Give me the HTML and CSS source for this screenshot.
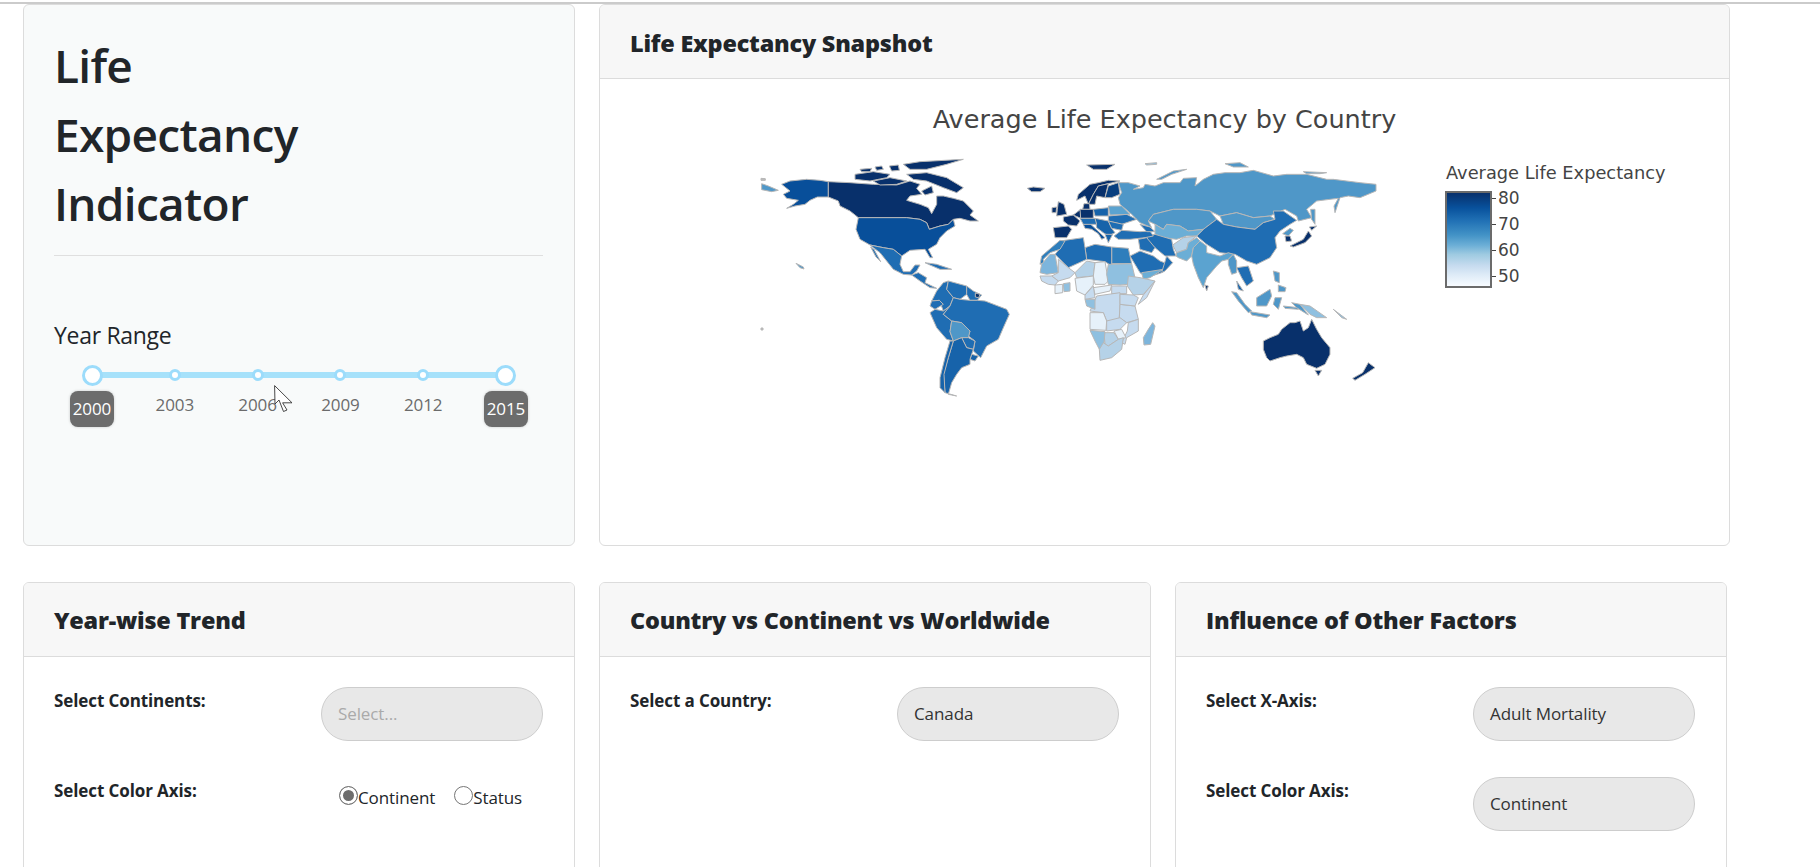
FILE: index.html
```html
<!DOCTYPE html>
<html lang="en">
<head>
<meta charset="utf-8">
<title>Life Expectancy Indicator</title>
<link rel="stylesheet" href="styles.css">
</head>
<body>
<div class="topline"></div>
<main class="page">
  <section class="row row-top">
    <aside class="card side">
      <h1 class="title">Life<br>Expectancy<br>Indicator</h1>
      <hr class="rule">
      <h4 class="range-label">Year Range</h4>
      <div class="slider">
        <div class="stop"><span class="dot-wrap"><i class="handle"></i></span><span class="tip">2000</span></div>
        <div class="stop"><span class="dot-wrap"><i class="dot"></i></span><span class="mark">2003</span></div>
        <div class="stop"><span class="dot-wrap"><i class="dot"></i></span><span class="mark">2006</span></div>
        <div class="stop"><span class="dot-wrap"><i class="dot"></i></span><span class="mark">2009</span></div>
        <div class="stop"><span class="dot-wrap"><i class="dot"></i></span><span class="mark">2012</span></div>
        <div class="stop"><span class="dot-wrap"><i class="handle"></i></span><span class="tip">2015</span></div>
      </div>
    </aside>
    <article class="card wide">
      <header class="card-head head-top">Life Expectancy Snapshot</header>
      <div class="plot">
        <div class="plot-title">Average Life Expectancy by Country</div>
        <div class="plot-main">
          <svg class="map" viewBox="0 0 1920 810" aria-label="World choropleth map">
            <g>
              <!-- Americas -->
              <polygon class="s3" points="65,128 85,135 115,148 95,152 65,146"/>
              <polygon class="n" points="63,112 76,113 76,118 63,118"/>
              <polygon class="s1" points="265,122 265,168 232,168 210,178 195,190 165,195 140,202 160,190 175,178 140,172 130,160 150,150 125,130 150,120 200,115 240,118"/>
              <polygon class="s0" points="265,122 330,125 400,130 470,132 510,120 540,130 530,142 545,160 510,165 500,178 540,190 565,200 575,218 590,190 590,165 610,165 640,172 670,180 700,210 690,222 715,240 690,240 660,232 640,235 625,250 600,255 568,265 560,245 540,235 500,230 355,230 330,210 300,195 295,180 265,168"/>
              <polygon class="s0" points="490,70 540,62 670,55 620,70 560,85 510,85"/>
              <polygon class="s0" points="345,100 400,92 450,100 440,110 390,120 345,115"/>
              <polygon class="s0" points="400,120 450,110 500,120 470,130 420,132"/>
              <polygon class="s0" points="500,100 560,95 620,110 670,140 650,155 610,140 560,120 520,115"/>
              <polygon class="s0" points="360,85 395,82 390,92 365,92"/>
              <polygon class="s0" points="405,78 425,75 430,85 410,88"/>
              <polygon class="s0" points="448,75 475,72 478,88 455,90"/>
              <polygon class="s0" points="545,150 575,135 580,155 555,162"/>
              <polygon class="s1" points="355,230 500,230 540,235 560,245 568,265 600,255 625,250 640,235 645,255 620,270 600,290 590,310 565,325 578,350 570,350 555,325 510,328 485,345 460,325 430,320 390,312 360,295 348,265"/>
              <polygon class="s2" points="390,312 430,320 460,325 485,345 480,370 490,392 510,392 525,372 540,372 530,390 515,402 490,400 460,385 440,360 420,335 400,320"/>
              <polygon class="s2" points="392,318 402,325 422,362 408,348"/>
              <polygon class="s2" points="515,402 535,395 560,410 555,425 590,442 570,440 540,420"/>
              <polygon class="s2" points="555,365 590,370 635,385 600,385 570,372"/>
              <polygon class="s3" points="168,367 190,378 192,384 180,380"/>
              <polygon class="s2" points="610,425 625,420 620,445 640,470 630,495 610,510 598,478 575,480 590,450"/>
              <polygon class="s2" points="625,420 680,435 680,460 660,475 640,470 620,445"/>
              <polygon class="s2" points="680,435 700,450 725,462 712,478 690,478 680,460"/>
              <polygon class="s0" points="706,456 720,460 716,470 706,468"/>
              <polygon class="s2" points="575,480 598,478 610,490 585,505 570,495"/>
              <polygon class="s2" points="585,505 610,510 630,495 610,520 635,540 630,572 640,600 620,595 590,560 570,515"/>
              <polygon class="s2" points="640,470 660,475 690,478 712,478 735,480 800,505 808,520 790,560 775,595 740,615 722,650 700,630 705,600 685,585 690,570 665,545 635,540 610,520 630,495"/>
              <polygon class="s3" points="635,540 665,545 690,570 685,590 665,590 640,600 630,572"/>
              <polygon class="s2" points="665,590 685,590 705,600 700,625 680,620"/>
              <polygon class="s1b" points="695,640 715,645 705,660 690,655"/>
              <polygon class="s1b" points="640,600 665,590 680,620 700,625 690,655 690,670 665,680 650,700 635,725 625,760 650,765 615,755 610,700 625,650"/>
              <polygon class="s1b" points="630,600 640,600 625,650 612,700 615,755 600,740 600,710 615,650"/>
              <polygon class="n" points="63,561 69,561 69,567 63,567"/>
              <polygon class="s0" points="862,142 880,138 915,142 900,152 875,152"/>
            </g>
            <g class="east">
              <!-- Eurasia -->
              <polygon class="s3" points="235,125 265,125 300,135 280,145 310,140 315,130 345,135 370,125 420,125 430,112 470,110 465,135 490,115 520,100 555,95 600,95 640,88 665,95 700,105 740,100 800,100 860,115 880,115 960,125 1008,130 1008,150 960,170 925,165 900,170 885,215 882,195 895,172 870,175 830,180 800,205 815,230 775,240 770,225 735,205 690,225 640,230 590,215 540,225 510,210 470,205 400,205 340,220 325,240 335,260 300,245 275,220 240,190 235,170 245,155"/>
              <polygon class="s3" points="555,68 600,65 625,78 580,78"/>
              <polygon class="s3" points="350,115 400,90 440,85 395,100 365,115"/>
              <polygon class="s3" points="790,92 860,95 840,98 800,98"/>
              <polygon class="s3" points="812,205 825,205 825,250 815,235"/>
              <polygon class="s5" points="315,68 350,65 350,70 320,72"/>
              <polygon class="s0" points="140,72 225,70 200,85 160,85"/>
              <polygon class="s3" points="340,220 400,205 470,205 510,210 530,235 490,265 445,270 420,255 380,250 370,265 345,250 325,240"/>
              <polygon class="s3" points="540,225 590,215 640,230 690,225 705,235 670,245 645,265 590,258 550,250"/>
              <polygon class="s2" points="530,235 550,250 590,258 645,265 670,245 705,235 700,210 730,210 770,238 750,250 720,270 705,290 710,320 690,350 650,370 620,360 585,340 540,335 500,310 470,285 490,265"/>
              <polygon class="s3" points="728,278 750,262 760,268 745,285"/>
              <polygon class="s0" points="735,285 750,285 755,300 738,302"/>
              <polygon class="s0" points="750,315 790,295 805,270 815,285 795,305 760,318"/>
              <polygon class="s0" points="808,258 830,255 815,268"/>
              <polygon class="s4" points="345,250 370,265 380,250 420,255 445,270 490,265 470,285 440,285 410,295 370,290 345,280"/>
              <polygon class="s2" points="320,285 345,280 395,295 400,325 408,345 375,345 345,320 325,305"/>
              <polygon class="s6" points="398,312 430,290 470,285 445,305 440,325 410,335"/>
              <polygon class="s4" points="408,345 410,335 440,325 445,305 470,290 480,300 460,320 455,345 440,360 415,350"/>
              <polygon class="s3b" points="455,345 460,320 480,300 500,315 500,335 540,345 565,335 580,340 565,355 545,360 530,375 500,410 490,440 475,410 460,370"/>
              <polygon class="s0" points="495,432 505,435 500,450"/>
              <polygon class="s3" points="565,355 580,340 590,360 590,395 575,400 565,370"/>
              <polygon class="s2" points="590,380 625,375 640,420 620,435 605,410"/>
              <polygon class="s1b" points="590,420 610,450 595,445"/>
              <polygon class="s3" points="575,452 590,455 615,490 635,510 625,515 595,480"/>
              <polygon class="s3" points="630,512 690,522 680,530 635,522"/>
              <polygon class="s3" points="650,470 690,445 695,465 680,495 650,495"/>
              <polygon class="s3" points="705,470 725,470 715,505 700,490"/>
              <polygon class="s3" points="700,390 718,395 718,425 705,420"/>
              <polygon class="s3" points="715,432 738,440 735,452 715,452"/>
              <polygon class="s3" points="730,495 775,500 775,505 735,502"/>
              <polygon class="s3" points="755,485 780,490 805,522 770,500"/>
              <polygon class="s5" points="780,490 810,495 860,530 830,530 810,520"/>
              <polygon class="s5" points="880,505 920,535 905,530"/>
              <polygon class="s0" points="670,600 690,590 715,580 725,565 750,545 765,545 780,540 790,570 805,560 815,535 830,565 845,590 870,620 870,640 855,670 830,682 800,670 790,650 770,640 740,645 720,650 690,660 680,650 670,625"/>
              <polygon class="s0" points="825,688 845,688 835,705"/>
              <polygon class="s0" points="985,665 1005,680 975,700 945,718 938,712 968,695"/>
              <!-- Middle East -->
              <polygon class="s2" points="222,285 245,268 300,272 330,270 340,285 315,290 270,295 235,295"/>
              <polygon class="s2" points="300,250 330,258 345,272 320,272"/>
              <polygon class="s2" points="295,295 320,290 345,320 335,335 300,325"/>
              <polygon class="s2" points="270,345 300,330 340,345 360,360 385,370 365,395 320,410 300,395"/>
              <polygon class="s4" points="305,395 370,385 330,410 310,415"/>
              <polygon class="s2" points="380,345 398,365 375,390 365,395"/>
              <!-- Africa -->
              <polygon class="s2b" points="215,318 265,322 275,368 215,368"/>
              <polygon class="s2" points="135,320 165,310 215,318 215,375 195,362 140,355"/>
              <polygon class="s2" points="60,300 130,290 135,320 140,355 85,380 45,340 60,322"/>
              <polygon class="s2b" points="40,315 60,298 75,300 60,325 30,335 10,355 12,365 0,370 5,345"/>
              <polygon class="s4b" points="5,370 30,340 45,340 55,395 20,400 0,395"/>
              <polygon class="s7" points="55,355 85,380 105,395 90,410 55,420 35,405 55,395"/>
              <polygon class="s6" points="105,395 140,360 165,365 160,405 110,410"/>
              <polygon class="s8" points="165,365 195,362 205,420 195,430 165,430 160,405"/>
              <polygon class="s5" points="205,370 275,368 285,410 262,430 240,432 205,430 200,400"/>
              <polygon class="s6" points="265,405 300,410 345,420 310,460 280,462 262,435"/>
              <polygon class="s7" points="345,420 320,470 295,490 310,462"/>
              <polygon class="s7" points="215,435 260,435 260,458 215,458"/>
              <polygon class="s8" points="160,440 215,432 210,450 165,460"/>
              <polygon class="s7" points="0,405 35,405 55,420 45,432 25,430 5,420"/>
              <polygon class="s8" points="45,432 68,430 68,455 45,458"/>
              <polygon class="s5" points="70,428 90,425 90,450 72,452"/>
              <polygon class="s8" points="105,412 160,405 160,432 135,462 110,450"/>
              <polygon class="s7" points="135,462 160,435 165,470 135,475"/>
              <polygon class="s7" points="170,465 240,455 240,490 238,530 232,540 200,540 190,515 150,510"/>
              <polygon class="s5" points="135,475 165,475 165,505 140,495"/>
              <polygon class="s8" points="150,515 190,515 200,540 198,568 150,565"/>
              <polygon class="s7" points="240,490 285,495 295,535 260,545 238,530"/>
              <polygon class="s7" points="240,460 280,462 295,470 285,495 240,490"/>
              <polygon class="s7" points="200,540 240,530 260,545 240,565 200,570"/>
              <polygon class="s7" points="265,545 295,535 295,570 260,590 255,610 245,605 262,570"/>
              <polygon class="s8" points="222,570 245,565 258,590 235,595"/>
              <polygon class="s6" points="192,575 222,575 235,595 205,615 195,610"/>
              <polygon class="s5" points="150,568 195,572 190,625 178,625 165,600"/>
              <polygon class="s6" points="190,605 205,615 235,595 250,590 245,625 215,650 180,658 178,625"/>
              <polygon class="s4b" points="338,545 345,555 332,610 312,612 310,590 325,565"/>
              <!-- Europe -->
              <polygon class="s0" points="40,260 85,255 95,265 80,290 45,290"/>
              <polygon class="s0" points="70,228 100,222 120,240 110,255 85,252 70,240"/>
              <polygon class="s0" points="100,222 122,205 122,232"/>
              <polygon class="s0" points="52,205 55,182 72,190 80,220 50,225"/>
              <polygon class="s0" points="36,200 50,198 48,215 36,215"/>
              <polygon class="s0" points="110,178 115,160 150,130 175,125 205,118 240,120 205,128 175,135 160,160 145,190 135,165"/>
              <polygon class="s0" points="145,190 160,160 175,135 205,128 195,170 170,165 165,190"/>
              <polygon class="s0b" points="195,170 205,135 235,125 240,160 215,170"/>
              <polygon class="s0" points="132,188 148,188 150,205 128,205"/>
              <polygon class="s0" points="120,205 160,205 160,232 122,232"/>
              <polygon class="s1b" points="160,205 205,200 205,225 165,225"/>
              <polygon class="s1" points="130,250 150,248 165,262 195,290 185,295 175,278 155,265 135,262"/>
              <polygon class="s2" points="205,225 260,220 290,235 245,250 205,240"/>
              <polygon class="s3b" points="205,195 245,195 270,220 210,222"/>
              <polygon class="s1b" points="165,232 205,240 215,262 225,275 205,285 190,275 170,260"/>
              <polygon class="s2" points="205,240 250,250 245,268 215,262"/>
              <polygon class="s1b" points="195,280 218,280 205,305"/>
              <polygon class="s2" points="120,232 165,232 170,250 130,250"/>
            </g>
          </svg>
          <div class="legend">
            <div class="legend-title">Average Life Expectancy</div>
            <div class="scale">
              <div class="bar"></div>
              <ul class="ticks">
                <li>80</li><li>70</li><li>60</li><li>50</li>
              </ul>
            </div>
          </div>
        </div>
      </div>
    </article>
    <svg class="cursor" viewBox="0 0 19 28"><polygon points="0.6,0.6 1,19 5,15 9.5,26.5 13,25 8.6,17.8 18,17.8"/></svg>
  </section>

  <section class="row row-bottom">
    <article class="card panel">
      <header class="card-head">Year-wise Trend</header>
      <div class="card-body">
        <div class="field">
          <label class="field-label">Select Continents:</label>
          <div class="select placeholder">Select...</div>
        </div>
        <div class="field">
          <label class="field-label">Select Color Axis:</label>
          <div class="radios">
            <label class="radio-item"><input class="radio" type="radio" name="axis" checked>Continent</label>
            <label class="radio-item"><input class="radio" type="radio" name="axis">Status</label>
          </div>
        </div>
      </div>
    </article>
    <article class="card panel">
      <header class="card-head">Country vs Continent vs Worldwide</header>
      <div class="card-body">
        <div class="field">
          <label class="field-label">Select a Country:</label>
          <div class="select">Canada</div>
        </div>
      </div>
    </article>
    <article class="card panel">
      <header class="card-head">Influence of Other Factors</header>
      <div class="card-body">
        <div class="field">
          <label class="field-label">Select X-Axis:</label>
          <div class="select">Adult Mortality</div>
        </div>
        <div class="field">
          <label class="field-label">Select Color Axis:</label>
          <div class="select">Continent</div>
        </div>
      </div>
    </article>
  </section>
</main>
</body>
</html>
```

FILE: styles.css
```css
* { box-sizing: border-box; }
html, body { margin: 0; height: 867px; overflow: hidden; background: #fff; }
body { font-family: "Open Sans", "Noto Sans", sans-serif; color: #212529; }

.topline { height: 4px; border-top: 1px solid #fff; border-bottom: 2px solid #cbcbcb; }
.page { padding-left: 23px; display: flex; flex-direction: column; gap: 36px; }
.row { display: flex; gap: 24px; position: relative; }
.row-top { height: 542px; }
.row-bottom { height: 400px; }

.card { border: 1px solid #dcdcdc; border-radius: 6px; background: #fff; overflow: hidden; }
.side { width: 552px; background: #f8fafa; padding: 26px 31px 0 30px; }
.wide { width: 1131px; }
.panel { width: 552px; }

.title { margin: 0; font-size: 46px; font-weight: 600; line-height: 69px; letter-spacing: -0.7px; color: #212529; }
.rule { border: 0; border-top: 1px solid #dfdfdf; margin: 17px 0 0; }
.range-label { margin: 63px 0 0; font-size: 23px; line-height: 32px; font-weight: 400; letter-spacing: -0.3px; }

.slider { margin: 13px 0 0 16px; width: 458px; display: flex; justify-content: space-between; position: relative; }
.slider::before { content: ""; position: absolute; left: 22px; right: 22px; top: 8px; height: 6px; background: #a6e1fa; }
.stop { width: 44px; display: flex; flex-direction: column; align-items: center; position: relative; }
.dot-wrap { height: 22px; display: flex; align-items: center; justify-content: center; position: relative; }
.handle { width: 21px; height: 21px; border-radius: 50%; background: #fff; border: 3px solid #9cdcfb; }
.dot { width: 12px; height: 12px; border-radius: 50%; background: #fff; border: 3px solid #9cdcfb; }
.mark { margin-top: 7px; font-size: 17px; line-height: 24px; color: #6b6b6b; letter-spacing: -0.1px; }
.tip { margin-top: 5px; width: 44px; height: 36px; border-radius: 8px; background: #6c6c6c; color: #fff; font-size: 17px; line-height: 36px; text-align: center; letter-spacing: -0.1px; box-shadow: 0 0 3px rgba(0,0,0,.2); }

.card-head { height: 74px; padding: 0 30px; display: flex; align-items: center; background: #f7f7f7; border-bottom: 1px solid #dcdcdc; font-size: 23.4px; font-weight: 800; color: #212529; letter-spacing: -0.2px; }
.head-top { padding-top: 2px; }
.card-body { padding: 30px 31px 0 30px; display: flex; flex-direction: column; gap: 36px; }
.field { display: flex; justify-content: space-between; align-items: flex-start; min-height: 54px; }
.field-label { font-size: 17px; font-weight: 700; line-height: 24px; margin-top: 2px; letter-spacing: -0.1px; }
.select { width: 222px; height: 54px; border-radius: 27px; background: #e8e8e8; border: 1px solid #cdcdcd; padding: 0 16px 2px; display: flex; align-items: center; font-size: 17px; letter-spacing: -0.1px; color: #333; }
.placeholder { color: #aaa; }

.radios { width: 222px; padding: 9px 0 0 18px; display: flex; gap: 19px; font-size: 17px; letter-spacing: -0.1px; color: #212529; }
.radio-item { display: flex; align-items: flex-start; line-height: 24px; }
.radio { appearance: none; -webkit-appearance: none; width: 19px; height: 19px; margin: 0; border-radius: 50%; border: 1px solid #767676; background: #fff; flex: none; }
.radio:checked { background: #6d6d6d; box-shadow: inset 0 0 0 3px #fff; }

.plot { height: 467px; }
.plot-title { height: 62px; padding-top: 25px; text-align: center; font-family: "DejaVu Sans", sans-serif; font-size: 25.5px; line-height: 30px; color: #444; }
.plot-main { display: flex; align-items: flex-start; }
.map { width: 640px; height: 270px; margin-left: 140px; flex: none; }
.map polygon { stroke: #b7b7b7; stroke-width: 3; stroke-linejoin: round; }
.east { transform: translateX(900px); }
.s0 { fill: #08306b; }
.s0b { fill: #083f80; }
.s1 { fill: #084f9a; }
.s1b { fill: #1763aa; }
.s2 { fill: #1f6db3; }
.s2b { fill: #2e7ebc; }
.s3 { fill: #4f97c8; }
.s3b { fill: #5ba3d0; }
.s4 { fill: #6baed6; }
.s4b { fill: #7db5dc; }
.s5 { fill: #8fc0e0; }
.s6 { fill: #b5d2e8; }
.s7 { fill: #c6dbef; }
.s8 { fill: #e6f1fa; }
.n { fill: #bbb; }

.legend { margin: 22px 0 0 65px; font-family: "DejaVu Sans", sans-serif; color: #444; }
.legend-title { font-size: 17.8px; line-height: 20px; white-space: nowrap; padding-left: 1px; }
.scale { display: flex; margin-top: 8px; }
.bar { width: 47px; height: 97px; border: 2px solid #6b6b6b; background: linear-gradient(#08306b 0%, #08519c 16%, #2171b5 30%, #4292c6 45%, #6baed6 56%, #9ecae1 66%, #c6dbef 78%, #deebf7 88%, #f7fbff 100%); }
.ticks { list-style: none; margin: 0; padding: 0 0 0 6px; display: flex; flex-direction: column; }
.ticks li { height: 26px; line-height: 14px; font-size: 17px; position: relative; }
.ticks li::before { content: ""; position: absolute; left: -6px; top: 7px; width: 4px; height: 1px; background: #444; }

.cursor { position: absolute; left: 251px; top: 381px; width: 19px; height: 28px; }
.cursor polygon { fill: #fff; stroke: #333; stroke-width: 0.9; }
```
